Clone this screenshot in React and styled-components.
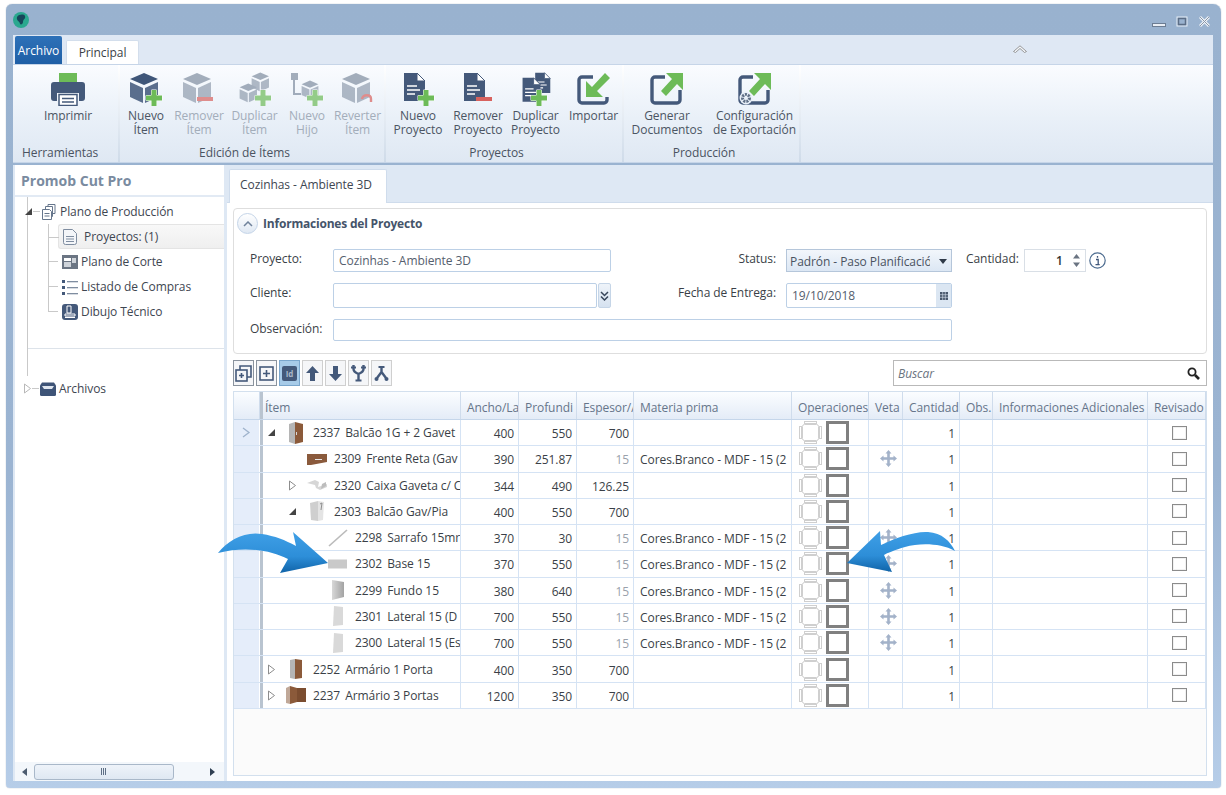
import React from 'react';
import styled, { createGlobalStyle } from 'styled-components';

const GlobalStyles = createGlobalStyle`
  html, body {
    margin: 0;
    padding: 0;
    background: #fff;
  }
  body {
    font-family: "Open Sans", "Noto Sans", sans-serif;
    font-size: 12px;
    letter-spacing: -0.07px;
    color: #3a3f47;
  }
`;

const DARK = '#44597a';
const GREEN = '#6dbb58';
const RED = '#d8625e';
const GRID_COLUMNS = '26px 201px 58px 58px 57px 158px 77px 34px 57px 33px 155px 58px';

const Page = styled.div`
  position: relative;
  width: 1226px;
  height: 795px;
  padding: 4px 5px 7px 6px;
  box-sizing: border-box;
`;

const Window = styled.div`
  height: 100%;
  display: flex;
  flex-direction: column;
  border-radius: 6px 8px 4px 4px;
  background: linear-gradient(#99b2cf, #9bb4d2 60%, #b6cde8);
  box-shadow: 0 0 1px #7f8ea3;
  padding: 0 8px 7px 7px;
  box-sizing: border-box;
`;

const TitleBar = styled.div`
  height: 31px;
  flex: none;
  display: flex;
  align-items: center;
  justify-content: space-between;
  padding-right: 2px;
`;

const WindowButtons = styled.div`
  display: flex;
  align-items: center;
  gap: 10px;
  margin-top: 4px;
`;

const TabStrip = styled.div`
  height: 29px;
  flex: none;
  display: flex;
  align-items: flex-end;
  gap: 4px;
  padding-left: 2px;
  background: #dfe8f4;
  position: relative;
`;

const FileTab = styled.div`
  width: 47px;
  height: 28px;
  display: flex;
  align-items: center;
  justify-content: center;
  color: #fff;
  background: linear-gradient(#2e71b8, #1f5fa6);
  border-radius: 2px 2px 0 0;
`;

const RibbonTab = styled.div`
  width: 73px;
  height: 24px;
  display: flex;
  align-items: center;
  justify-content: center;
  background: #fff;
  border: 1px solid #d3deec;
  border-bottom: none;
  border-radius: 2px 2px 0 0;
  box-sizing: border-box;
`;

const Collapse = styled.svg`
  position: absolute;
  right: 186px;
  top: 10px;
`;

const Ribbon = styled.div`
  height: 99px;
  flex: none;
  display: flex;
  padding-left: 2px;
  background: linear-gradient(#fafcff, #e9f0f8 55%, #dfe8f3);
  border-top: 1px solid #c6d5e8;
  border-bottom: 1px solid #c6d5e8;
  box-sizing: border-box;
`;

const Group = styled.div`
  flex: ${p => (p.$fill ? 1 : 'none')};
  display: flex;
  flex-direction: column;
  width: ${p => (p.$width ? `${p.$width}px` : 'auto')};
`;

const GroupButtons = styled.div`
  flex: 1;
  display: flex;
`;

const GroupLabel = styled.div`
  height: 20px;
  text-align: ${p => (p.$left ? 'left' : 'center')};
  padding: ${p => (p.$left ? '0 0 0 7px' : '0 15px 0 0')};
  line-height: 22px;
  color: #4a5361;
`;

const Divider = styled.div`
  width: 2px;
  flex: none;
  background: linear-gradient(#fff, #cfdbe9);
`;

const RibbonButton = styled.div`
  width: ${p => p.$width}px;
  flex: none;
  display: flex;
  flex-direction: column;
  align-items: center;
  padding-top: 7px;
  text-align: center;
  line-height: 14px;
  color: ${p => (p.$off ? '#a3adba' : '#4b5563')};
  white-space: nowrap;
  svg {
    margin-bottom: 3px;
    opacity: ${p => (p.$off ? 0.7 : 1)};
  }
`;

const Body = styled.div`
  flex: 1;
  min-height: 0;
  display: flex;
  margin-top: 2px;
  background: #dee8f4;
  padding: 0 0 0 2px;
`;

const Sidebar = styled.div`
  width: 209px;
  flex: none;
  display: flex;
  flex-direction: column;
  background: #fff;
`;

const SidebarTitle = styled.div`
  height: 32px;
  flex: none;
  padding-left: 6px;
  line-height: 31px;
  font-size: 14px;
  font-weight: 700;
  color: #7a8ba0;
  border-bottom: 2px solid #e2eaf4;
  box-sizing: border-box;
  letter-spacing: 0;
`;

const TreeArea = styled.div`
  flex: 1;
  padding-left: 12px;
`;

const TreeTrunk = styled.div`
  border-left: 1px solid #c9c9c9;
  height: 179px;
  position: relative;
`;

const TreeNode = styled.div`
  height: 25px;
  display: flex;
  align-items: center;
  padding-top: ${p => p.$top || 0}px;
  color: #3e4651;
  white-space: nowrap;
`;

const Expander = styled.svg`
  margin-left: -4px;
  flex: none;
`;

const NodeLine = styled.span`
  width: 7px;
  height: 1px;
  background: #c9c9c9;
  flex: none;
`;

const NodeLabel = styled.span`
  margin-left: 2px;
`;

const SubTree = styled.div`
  margin-left: 20px;
  position: relative;
  &::before {
    content: '';
    position: absolute;
    left: 0;
    top: 0;
    height: 88px;
    width: 1px;
    background: #c9c9c9;
  }
`;

const SubNode = styled.div`
  height: 25px;
  display: flex;
  align-items: center;
  gap: ${p => (p.$selected ? 5 : 2)}px;
  margin-left: 10px;
  padding-left: ${p => (p.$selected ? 2 : 3)}px;
  white-space: nowrap;
  color: #3e4651;
  position: relative;
  box-sizing: border-box;
  background: ${p => (p.$selected ? 'linear-gradient(#f8f8f8, #efefef)' : 'none')};
  border: ${p => (p.$selected ? '1px solid #e4e4e4' : 'none')};
  border-right: none;
  border-radius: 3px 0 0 3px;
  &::before {
    content: '';
    position: absolute;
    left: -10px;
    top: 12px;
    width: 10px;
    height: 1px;
    background: #c9c9c9;
  }
`;

const TreeRule = styled.div`
  position: absolute;
  left: 0;
  right: 0;
  top: 151px;
  height: 1px;
  background: #dde3ea;
`;

const ScrollBar = styled.div`
  height: 19px;
  flex: none;
  display: flex;
  align-items: center;
  padding: 0 9px 0 7px;
  background: #f3f7fb;
  box-sizing: border-box;
`;

const ScrollThumb = styled.div`
  width: 140px;
  height: 16px;
  margin: 0 auto 0 6px;
  display: flex;
  align-items: center;
  justify-content: center;
  border: 1px solid #a9b8c9;
  border-radius: 3px;
  background: linear-gradient(#eef3f9, #dfe8f2);
  box-sizing: border-box;
`;

const Content = styled.div`
  flex: 1;
  min-width: 0;
  display: flex;
  flex-direction: column;
  margin-left: 3px;
`;

const DocTabs = styled.div`
  height: 38px;
  flex: none;
  display: flex;
  align-items: flex-end;
  padding-left: 2px;
  box-sizing: border-box;
  border-bottom: 1px solid #cfdcec;
`;

const DocTab = styled.div`
  width: 158px;
  height: 34px;
  display: flex;
  align-items: center;
  justify-content: center;
  background: #fff;
  border: 1px solid #cfdcec;
  border-bottom: none;
  border-radius: 2px 2px 0 0;
  margin-bottom: -1px;
  box-sizing: border-box;
  padding: 0 4px 4px 0;
  color: #3e4651;
`;

const DocBody = styled.div`
  flex: 1;
  min-height: 0;
  display: flex;
  flex-direction: column;
  padding: 5px 6px 5px 6px;
  background: #fff;
`;

const InfoBox = styled.div`
  height: 146px;
  flex: none;
  border: 1px solid #dedede;
  border-radius: 4px;
  box-sizing: border-box;
  padding: 4px 0 0 3px;
`;

const InfoHeader = styled.div`
  display: flex;
  align-items: center;
  gap: 5px;
  height: 21px;
  font-weight: 700;
  color: #45546a;
  letter-spacing: -0.2px;
`;

const CollapseCircle = styled.div`
  width: 21px;
  height: 21px;
  border-radius: 50%;
  border: 1px solid #c4d4e8;
  background: linear-gradient(#fff, #dfe8f3);
  box-sizing: border-box;
  display: flex;
  align-items: center;
  justify-content: center;
`;

const FormGrid = styled.div`
  display: grid;
  grid-template-columns: 83px 278px 175px 166px auto;
  grid-template-rows: 23px 25px 22px;
  row-gap: 11px;
  margin: 15px 0 0 13px;
  align-items: stretch;
`;

const FieldLabel = styled.div`
  line-height: 19px;
  color: #3a3f47;
  text-align: ${p => (p.$right ? 'right' : 'left')};
  padding-right: ${p => (p.$right ? 10 : 0)}px;
  white-space: nowrap;
`;

const Input = styled.div`
  border: 1px solid #bcd0e6;
  border-radius: 2px;
  background: #fff;
  box-sizing: border-box;
  padding-left: 5px;
  line-height: 22px;
  color: #55606e;
  grid-column: ${p => p.$span || 'auto'};
  display: flex;
  align-items: center;
  justify-content: space-between;
  overflow: hidden;
  white-space: nowrap;
`;

const ClientField = styled.div`
  display: flex;
  gap: 1px;
`;

const ClientInput = styled(Input)`
  flex: 1;
`;

const ClientButton = styled.div`
  width: 13px;
  border: 1px solid #c5d5e7;
  border-radius: 2px;
  background: linear-gradient(#eef3f9, #d6e2f0);
  box-sizing: border-box;
  display: flex;
  align-items: center;
  justify-content: center;
`;

const SelectBox = styled.div`
  border: 1px solid #b5c6da;
  background: linear-gradient(#f2f6fb, #dce7f4);
  box-sizing: border-box;
  display: flex;
  align-items: center;
  padding: 1px 0 0 3px;
  color: #4a5361;
  white-space: nowrap;
  overflow: hidden;
`;

const SelectText = styled.span`
  width: 140px;
  overflow: hidden;
`;

const SelectCaret = styled.svg`
  margin-left: 9px;
  flex: none;
`;

const DateButton = styled.div`
  width: 15px;
  align-self: stretch;
  flex: none;
  background: #dbe6f2;
  display: flex;
  align-items: center;
  justify-content: center;
`;

const QuantityWrap = styled.div`
  display: flex;
  align-items: flex-start;
  margin-left: 14px;
  gap: 5px;
  white-space: nowrap;
`;

const Spin = styled.div`
  width: 62px;
  height: 23px;
  border: 1px solid #d9dfe6;
  box-sizing: border-box;
  display: flex;
  align-items: center;
  justify-content: flex-end;
  gap: 10px;
  padding-right: 5px;
  font-weight: 600;
  color: #333;
`;

const InfoIcon = styled.svg`
  margin: 3px 0 0 -2px;
`;

const ToolRow = styled.div`
  height: 26px;
  flex: none;
  display: flex;
  align-items: center;
  justify-content: space-between;
  margin-top: 6px;
`;

const ToolButtons = styled.div`
  display: flex;
  gap: 2px;
`;

const ToolButton = styled.div`
  width: 21px;
  height: 26px;
  display: flex;
  align-items: center;
  justify-content: center;
  box-sizing: border-box;
  border: 1px solid ${p => (p.$active ? '#7aa6cc' : p.$strong ? '#8a939e' : '#cfcfcf')};
  background: ${p => (p.$active ? '#a7cbe8' : '#f5f6f8')};
`;

const IdGlyph = styled.div`
  width: 15px;
  height: 15px;
  border-radius: 2px;
  background: ${DARK};
  color: #aab6c7;
  font-size: 8px;
  font-weight: 700;
  line-height: 15px;
  text-align: center;
  letter-spacing: 0;
`;

const SearchBox = styled.div`
  width: 314px;
  height: 26px;
  border: 1px solid #b9b9b9;
  box-sizing: border-box;
  display: flex;
  align-items: center;
  justify-content: space-between;
  padding: 0 6px 0 4px;
  font-style: italic;
  color: #6c7480;
`;

const Grid = styled.div`
  flex: 1;
  min-height: 0;
  margin-top: 5px;
  border: 1px solid #d3e0ee;
  background: #fbfbfb;
  box-sizing: border-box;
  display: flex;
  flex-direction: column;
`;

const HeaderRow = styled.div`
  height: 28px;
  flex: none;
  display: grid;
  grid-template-columns: ${GRID_COLUMNS};
  background: linear-gradient(#fbfdff, #e4ecf7);
  border-bottom: 1px solid #c5d6ea;
  box-sizing: border-box;
`;

const HeaderCell = styled.div`
  padding-left: 6px;
  line-height: 31px;
  overflow: hidden;
  white-space: nowrap;
  color: #66758a;
  border-right: 1px solid #cfdcec;
`;

const ItemHeader = styled(HeaderCell)`
  border-left: 3px solid #b9c4d0;
  padding-left: 2px;
`;

const DataRow = styled.div`
  height: 26.27px;
  flex: none;
  display: grid;
  grid-template-columns: ${GRID_COLUMNS};
  background: #fff;
  border-bottom: 1px solid #d5e3f4;
  box-sizing: border-box;
`;

const RowHead = styled.div`
  background: #e5edfa;
  margin-right: 1px;
  display: flex;
  align-items: center;
  justify-content: center;
`;

const Cell = styled.div`
  display: flex;
  align-items: center;
  justify-content: ${p => (p.$num ? 'flex-end' : 'flex-start')};
  padding: ${p => (p.$num ? '2px 4px 0 0' : '2px 0 0 6px')};
  border-right: 1px solid #d5e3f4;
  overflow: hidden;
  white-space: nowrap;
  color: ${p => (p.$muted ? '#9aa1ab' : '#3a3f47')};
`;

const ItemCell = styled(Cell)`
  border-left: 3px solid #b9c4d0;
  padding-left: ${p => p.$indent}px;
  padding-top: 0;
  gap: 0;
`;

const ItemExpander = styled.span`
  width: 17px;
  flex: none;
  display: flex;
  align-items: center;
`;

const ItemThumb = styled.span`
  width: 24px;
  flex: none;
  display: flex;
  align-items: center;
  justify-content: center;
  margin-right: 5px;
`;

const ItemId = styled.span`
  margin-right: 5px;
`;

const OperationCell = styled(Cell)`
  gap: 4px;
  padding: 0 0 0 7px;
`;

const EdgeBox = styled.div`
  width: 23px;
  height: 23px;
  box-sizing: border-box;
  border: 3px solid #808080;
  flex: none;
`;

const CenterCell = styled(Cell)`
  justify-content: center;
  padding: 0 0 0 ${p => p.$nudge}px;
`;

const CheckBox = styled.div`
  width: 15px;
  height: 14px;
  border: 1px solid #8b8b8b;
  box-shadow: inset 0 0 0 1px #f1f1f1;
  box-sizing: border-box;
`;

const ArrowOverlay = styled.svg`
  position: absolute;
  left: 0;
  top: 0;
  pointer-events: none;
`;

/* icons */

const PlusBadge = ({ x = 17, y = 18 }) => (
  <path
    d={`M${x + 5.5} ${y}h5v5.500h5.500v5h-5.500v5.500h-5v-5.500h-5.500v-5h5.500z`}
    fill={GREEN}
    stroke="#fff"
    strokeWidth="1"
    paintOrder="stroke"
  />
);

const MinusBadge = () => <rect x="15" y="25" width="16" height="4" fill={RED} />;

const UndoBadge = () => (
  <path d="M21 27c1-5 9-5 9 0v3" fill="none" stroke={RED} strokeWidth="2.4" />
);

const Cube = ({ scale = 1, x = 0, y = 0, fill = DARK }) => (
  <g transform={`translate(${x} ${y}) scale(${scale})`} fill={fill}>
    <path d="M1 7 15 1l14 6-14 6z" />
    <path d="M1 10l13 6v15L1 25z" opacity=".85" />
    <path d="M29 10 16 16v15l13-6z" opacity=".85" />
  </g>
);

const BoxIcon = ({ kind, fill = '#3f5679' }) => (
  <svg width="34" height="34" viewBox="0 0 34 34">
    {kind === 'duplicate' ? (
      <>
        <Cube scale={0.62} x={13} y={0} fill={fill} />
        <Cube scale={0.62} x={1} y={11} fill={fill} />
        <PlusBadge />
      </>
    ) : kind === 'child' ? (
      <>
        <rect x="1" y="1" width="7" height="7" fill={fill} />
        <path d="M4 8v14h7" fill="none" stroke={fill} strokeWidth="2" />
        <Cube scale={0.6} x={11} y={8} fill={fill} />
        <PlusBadge />
      </>
    ) : (
      <>
        <Cube fill={fill} />
        {kind === 'new' && <PlusBadge />}
        {kind === 'remove' && <MinusBadge />}
        {kind === 'revert' && <UndoBadge />}
      </>
    )}
  </svg>
);

const PageShape = ({ x = 0, y = 0, scale = 1 }) => (
  <g transform={`translate(${x} ${y}) scale(${scale})`}>
    <path d="M3 1h13l8 8v20H3z" fill={DARK} />
    <path d="M16 1v8h8z" fill="#fff" stroke={DARK} strokeWidth="1" />
    <path d="M6 14h10M6 18h13M6 22h8" stroke="#fff" strokeWidth="1.5" />
  </g>
);

const DocIcon = ({ kind }) => (
  <svg width="34" height="34" viewBox="0 0 34 34">
    {kind === 'duplicate' ? (
      <>
        <PageShape x={14} y={0} scale={0.72} />
        <PageShape x={1} y={5} scale={0.85} />
        <PlusBadge x={12} y={18} />
      </>
    ) : (
      <>
        <PageShape />
        {kind === 'new' && <PlusBadge />}
        {kind === 'remove' && <MinusBadge />}
      </>
    )}
  </svg>
);

const ShareIcon = ({ inward, gear }) => (
  <svg width="34" height="34" viewBox="0 0 34 34">
    <path
      d={inward ? 'M16 5H5a3 3 0 0 0-3 3v20a3 3 0 0 0 3 3h22a3 3 0 0 0 3-3v-3' : 'M15 5H5a3 3 0 0 0-3 3v20a3 3 0 0 0 3 3h22a3 3 0 0 0 3-3V18'}
      fill="none"
      stroke={DARK}
      strokeWidth="3.4"
    />
    {inward ? (
      <path d="M9 9v16h17l-6-6L33 6l-5-5-13 14-6-6z" fill={GREEN} />
    ) : (
      <path d="M33 1v17l-6-6-11 12-5-5 11-12-6-6z" fill={GREEN} />
    )}
    {gear && (
      <>
        <circle cx="8" cy="26" r="6.500" fill="#e9f0f8" />
        <circle cx="8" cy="26" r="3.500" fill="none" stroke="#5f6f85" strokeWidth="3" strokeDasharray="2 1" />
      </>
    )}
  </svg>
);

const PrinterIcon = () => (
  <svg width="34" height="34" viewBox="0 0 34 34">
    <rect x="8" y="1" width="18" height="10" fill={GREEN} />
    <path d="M3 10h28a3 3 0 0 1 3 3v13a3 3 0 0 1-3 3h-3v-8H6v8H3a3 3 0 0 1-3-3V13a3 3 0 0 1 3-3z" fill={DARK} />
    <rect x="8" y="22.5" width="18" height="11" fill="#fff" stroke={DARK} strokeWidth="1.5" />
    <path d="M11 26.5h12M11 30h12" stroke={DARK} strokeWidth="1.5" />
  </svg>
);

const TreeIcon = ({ kind }) => (
  <svg width="18" height="18" viewBox="0 0 18 18" style={{ flex: 'none' }}>
    {kind === 'stack' && (
      <g fill="#fff" stroke="#66768c" strokeWidth="1">
        <path d="M8 1.500h7v9h-7z" />
        <path d="M5.500 3.500h7v10h-7z" />
        <path d="M2.500 6.500h7l2 2v8h-9z" />
        <path d="M4.500 10.500h5M4.500 13h5" />
      </g>
    )}
    {kind === 'doc' && (
      <g fill="#f4f6f9" stroke="#7f8da0" strokeWidth="1">
        <path d="M2.500 1.500h9l4 4v9a2 2 0 0 1-2 2h-9a2 2 0 0 1-2-2z" />
        <path d="M5 8.500h8M5 11h8M5 13.500h8" />
      </g>
    )}
    {kind === 'cut' && (
      <g>
        <rect x="1" y="2" width="16" height="14" fill="#6b7583" />
        <rect x="3" y="5" width="7" height="3" fill="#fff" />
        <rect x="11" y="5" width="4" height="5" fill="#cfd4da" />
        <rect x="3" y="9" width="7" height="5" fill="#cfd4da" />
      </g>
    )}
    {kind === 'list' && (
      <g fill={DARK}>
        <rect x="1" y="2" width="3" height="3" />
        <rect x="1" y="8" width="3" height="3" />
        <rect x="1" y="14" width="3" height="3" />
        <g fill="#7f8da0">
          <rect x="6" y="3" width="11" height="1.300" />
          <rect x="6" y="9" width="11" height="1.300" />
          <rect x="6" y="15" width="11" height="1.300" />
        </g>
      </g>
    )}
    {kind === 'draw' && (
      <g>
        <rect x="1" y="1" width="16" height="16" rx="3" fill={DARK} />
        <path d="M6 3h4v7H6zM4 11h10v2H4zM4 14.500h10" fill="none" stroke="#fff" strokeWidth="1" />
      </g>
    )}
    {kind === 'box' && (
      <g>
        <path d="M1 5.500 3 2.500h12l2 3v9a1.500 1.500 0 0 1-1.500 1.500h-13A1.500 1.500 0 0 1 1 14.500z" fill="#3e5477" />
        <path d="M3 6h12l-2 3H5z" fill="#dfe6ef" />
      </g>
    )}
  </svg>
);

const TriangleOpen = () => (
  <svg width="9" height="9" viewBox="0 0 9 9">
    <path d="M8 1v7H1z" fill="#444" />
  </svg>
);

const TriangleClosed = () => (
  <svg width="9" height="11" viewBox="0 0 9 11">
    <path d="M1.500 1 7.500 5.500 1.500 10z" fill="#fff" stroke="#8d8d8d" />
  </svg>
);

const ItemIcon = ({ kind }) => {
  switch (kind) {
    case 'cabinet':
      return (
        <svg width="18" height="24" viewBox="0 0 18 24">
          <path d="M2 3l6-2v22l-6-2z" fill="#b5b5b5" />
          <path d="M8 1l8 2v18l-8 2z" fill="#8b5a3a" />
          <path d="M9 11h1v3H9z" fill="#d8d8d8" />
        </svg>
      );
    case 'front':
      return (
        <svg width="20" height="12" viewBox="0 0 20 12">
          <path d="M0 1h20v8L4 12H0z" fill="#8a5a3c" />
          <path d="M8 6h7v1H8z" fill="#e8e8e8" />
        </svg>
      );
    case 'drawer':
      return (
        <svg width="20" height="10" viewBox="0 0 20 10">
          <path d="M0 3 8 0l4 2-1 5 9-3v3l-7 3-4-2-1-3z" fill="#d6d6d6" />
          <path d="M15 4l4-2v4l-5 3z" fill="#bdbdbd" />
        </svg>
      );
    case 'carcass':
      return (
        <svg width="16" height="22" viewBox="0 0 16 22">
          <path d="M1 3l8-2v20l-7-1z" fill="#cfcfcf" />
          <path d="M9 1l6 1-1 18-5 1z" fill="#e4e4e4" />
          <path d="M11 4l2-1-1 7" fill="none" stroke="#8e8e8e" />
        </svg>
      );
    case 'rod':
      return (
        <svg width="20" height="18" viewBox="0 0 20 18">
          <path d="M1 17 19 1" stroke="#bbb" strokeWidth="1.600" />
        </svg>
      );
    case 'plate':
      return (
        <svg width="20" height="10" viewBox="0 0 20 10">
          <rect width="19" height="9" y="0.500" fill="#c9c9c9" />
        </svg>
      );
    case 'back':
      return (
        <svg width="14" height="20" viewBox="0 0 14 20">
          <defs>
            <linearGradient id="backFill" x1="0" x2="1">
              <stop offset="0" stopColor="#d8d8d8" />
              <stop offset="1" stopColor="#a3a3a3" />
            </linearGradient>
          </defs>
          <path d="M1 0l12 2v15L1 20z" fill="url(#backFill)" />
        </svg>
      );
    case 'side':
      return (
        <svg width="14" height="22" viewBox="0 0 14 22">
          <path d="M3 1l9 1v18l-10 1z" fill="#d9d9d9" />
        </svg>
      );
    case 'door':
      return (
        <svg width="14" height="22" viewBox="0 0 14 22">
          <path d="M1 2l5-1v20l-5-1z" fill="#b5b5b5" />
          <path d="M6 1l7 1v18l-7 1z" fill="#8b5a3a" />
        </svg>
      );
    default:
      return (
        <svg width="20" height="18" viewBox="0 0 20 18">
          <path d="M0 2l4-2v18l-4-1z" fill="#c0a898" />
          <path d="M4 0l7 2v14l-7 2z" fill="#8b5a3a" />
          <path d="M11 2l9 0v14h-9z" fill="#7b4d30" />
        </svg>
      );
  }
};

const EdgeIcon = () => (
  <svg width="23" height="23" viewBox="0 0 23 23" style={{ flex: 'none' }}>
    <g fill="#fff" stroke="#cfcfcf">
      <rect x="5.500" y="0.500" width="12" height="2" />
      <rect x="5.500" y="20.500" width="12" height="2" />
      <rect x="0.500" y="5.500" width="2" height="12" />
      <rect x="20.500" y="5.500" width="2" height="12" />
      <path d="M3.500 5.500a2 2 0 0 1 2-2h12a2 2 0 0 1 2 2v12a2 2 0 0 1-2 2h-12a2 2 0 0 1-2-2z" />
    </g>
  </svg>
);

const MoveIcon = () => (
  <svg width="17" height="17" viewBox="0 0 17 17">
    <path
      d="M8.500 0 11.500 3.500H9.800V7.200H13.500V5.500L17 8.500 13.500 11.500V9.800H9.800V13.500H11.500L8.500 17 5.500 13.500H7.200V9.800H3.500V11.500L0 8.500 3.500 5.500V7.200H7.200V3.500H5.500z"
      fill="#a3b2c9"
    />
  </svg>
);

const ToolGlyph = ({ kind }) => {
  const c = DARK;
  switch (kind) {
    case 'expandAll':
      return (
        <svg width="17" height="17" viewBox="0 0 17 17" fill="none" stroke={c} strokeWidth="1.600">
          <path d="M5 5V1h11v11h-4" />
          <rect x="1" y="5" width="11" height="11" />
          <path d="M6.500 8v5M4 10.500h5" />
        </svg>
      );
    case 'add':
      return (
        <svg width="15" height="15" viewBox="0 0 15 15" fill="none" stroke={c} strokeWidth="1.600">
          <rect x="1" y="1" width="13" height="13" />
          <path d="M7.500 4v7M4 7.500h7" />
        </svg>
      );
    case 'up':
      return (
        <svg width="13" height="15" viewBox="0 0 13 15">
          <path d="M6.500 0 13 7H9v8H4V7H0z" fill={c} />
        </svg>
      );
    case 'down':
      return (
        <svg width="13" height="15" viewBox="0 0 13 15">
          <path d="M6.500 15 0 8h4V0h5v8h4z" fill={c} />
        </svg>
      );
    case 'merge':
      return (
        <svg width="15" height="17" viewBox="0 0 15 17" fill="none" stroke={c} strokeWidth="2.400">
          <path d="M2.500 0v4q0 3 5 5Q12.500 7 12.500 4V0M7.500 8v8" />
          <path d="M0 2.500h5M10 2.500h5M4.500 15.500h6" strokeWidth="2" />
        </svg>
      );
    default:
      return (
        <svg width="15" height="17" viewBox="0 0 15 17" fill="none" stroke={c} strokeWidth="2.400">
          <path d="M7.500 1v6M7.500 7 3 13M7.500 7 12 13" />
          <circle cx="2.500" cy="14" r="2" fill={c} stroke="none" />
          <circle cx="12.500" cy="14" r="2" fill={c} stroke="none" />
          <path d="M4.500 2h6" strokeWidth="2" />
        </svg>
      );
  }
};

const Arrows = () => (
  <ArrowOverlay width="1226" height="795" viewBox="0 0 1226 795">
    <defs>
      <linearGradient id="arrowBlue" x1="0" y1="0" x2="0" y2="1">
        <stop offset="0" stopColor="#3f9fe6" />
        <stop offset="0.6" stopColor="#2d8ed8" />
        <stop offset="1" stopColor="#0f63a8" />
      </linearGradient>
    </defs>
    <path
      d="M218 553C228 540 245 531 262 534 275 536 285 540 296 546L293 532 328 563 280 573 288 559C270 550 245 546 218 553Z"
      fill="url(#arrowBlue)"
    />
    <path
      d="M847 563 880 531 881 545C895 538 915 531 928 532 942 533 950 541 955 551 940 543 920 543 905 547 895 550 887 553 884 555L892 572Z"
      fill="url(#arrowBlue)"
    />
  </ArrowOverlay>
);

const MATERIAL = 'Cores.Branco - MDF - 15 (2';

const ROWS = [
  { level: 0, open: true, icon: 'cabinet', id: '2337', name: 'Balcão 1G + 2 Gavet', w: '400', d: '550', t: '700', current: true },
  { level: 1, icon: 'front', id: '2309', name: 'Frente Reta (Gav', w: '390', d: '251.87', t: '15', mat: true },
  { level: 1, closed: true, icon: 'drawer', id: '2320', name: 'Caixa Gaveta c/ C', w: '344', d: '490', t: '126.25' },
  { level: 1, open: true, icon: 'carcass', id: '2303', name: 'Balcão Gav/Pia', w: '400', d: '550', t: '700' },
  { level: 2, icon: 'rod', id: '2298', name: 'Sarrafo 15mr', w: '370', d: '30', t: '15', mat: true },
  { level: 2, icon: 'plate', id: '2302', name: 'Base 15', w: '370', d: '550', t: '15', mat: true },
  { level: 2, icon: 'back', id: '2299', name: 'Fundo 15', w: '380', d: '640', t: '15', mat: true },
  { level: 2, icon: 'side', id: '2301', name: 'Lateral 15 (D', w: '700', d: '550', t: '15', mat: true },
  { level: 2, icon: 'side', id: '2300', name: 'Lateral 15 (Es', w: '700', d: '550', t: '15', mat: true },
  { level: 0, closed: true, icon: 'door', id: '2252', name: 'Armário 1 Porta', w: '400', d: '350', t: '700' },
  { level: 0, closed: true, icon: 'wide', id: '2237', name: 'Armário 3 Portas', w: '1200', d: '350', t: '700' }
];

const HEADERS = ['Ancho/La', 'Profundi', 'Espesor/A', 'Materia prima', 'Operaciones', 'Veta', 'Cantidad', 'Obs.', 'Informaciones Adicionales', 'Revisado'];

const RIBBON_ITEMS = [
  { width: 52, lines: ['Nuevo', 'Ítem'], icon: <BoxIcon kind="new" /> },
  { width: 54, lines: ['Remover', 'Ítem'], icon: <BoxIcon kind="remove" fill="#7f8da0" />, off: true },
  { width: 57, lines: ['Duplicar', 'Ítem'], icon: <BoxIcon kind="duplicate" fill="#7f8da0" />, off: true },
  { width: 48, lines: ['Nuevo', 'Hijo'], icon: <BoxIcon kind="child" fill="#7f8da0" />, off: true },
  { width: 53, lines: ['Reverter', 'Ítem'], icon: <BoxIcon kind="revert" fill="#7f8da0" />, off: true }
];

const PROJECT_ITEMS = [
  { width: 64, lines: ['Nuevo', 'Proyecto'], icon: <DocIcon kind="new" /> },
  { width: 56, lines: ['Remover', 'Proyecto'], icon: <DocIcon kind="remove" /> },
  { width: 59, lines: ['Duplicar', 'Proyecto'], icon: <DocIcon kind="duplicate" /> },
  { width: 57, lines: ['Importar'], icon: <ShareIcon inward /> }
];

const OUTPUT_ITEMS = [
  { width: 86, lines: ['Generar', 'Documentos'], icon: <ShareIcon /> },
  { width: 89, lines: ['Configuración', 'de Exportación'], icon: <ShareIcon gear /> }
];

const RibbonGroup = ({ width, label, items }) => (
  <Group $width={width}>
    <GroupButtons>
      {items.map(item => (
        <RibbonButton key={item.lines.join()} $width={item.width} $off={item.off}>
          {item.icon}
          {item.lines.map(line => (
            <span key={line}>{line}</span>
          ))}
        </RibbonButton>
      ))}
    </GroupButtons>
    <GroupLabel>{label}</GroupLabel>
  </Group>
);

const GridRow = ({ row }) => (
  <DataRow>
    <RowHead>
      {row.current && (
        <svg width="9" height="11" viewBox="0 0 9 11">
          <path d="M1 1l6 4.500L1 10" fill="none" stroke="#9fb3cc" strokeWidth="1.300" />
        </svg>
      )}
    </RowHead>
    <ItemCell $indent={4 + row.level * 21}>
      <ItemExpander>{row.open ? <TriangleOpen /> : row.closed ? <TriangleClosed /> : null}</ItemExpander>
      <ItemThumb>
        <ItemIcon kind={row.icon} />
      </ItemThumb>
      <ItemId>{row.id}</ItemId>
      {row.name}
    </ItemCell>
    <Cell $num>{row.w}</Cell>
    <Cell $num>{row.d}</Cell>
    <Cell $num $muted={row.t === '15'}>{row.t}</Cell>
    <Cell>{row.mat ? MATERIAL : ''}</Cell>
    <OperationCell>
      <EdgeIcon />
      <EdgeBox />
    </OperationCell>
    <CenterCell $nudge={5}>{row.mat && <MoveIcon />}</CenterCell>
    <Cell $num>1</Cell>
    <Cell />
    <Cell />
    <CenterCell $nudge={5}>
      <CheckBox />
    </CenterCell>
  </DataRow>
);

const App = () => (
  <Page>
    <GlobalStyles />
    <Window>
      <TitleBar>
        <svg width="18" height="18" viewBox="0 0 18 18" style={{ marginLeft: -1 }}>
          <circle cx="9" cy="9" r="8" fill="#2aa88f" />
          <path d="M5 6c2-3 7-3 8-1 1 3-2 3-2 6 0 2-2 3-3 2 0-3-4-3-3-7z" fill="#17465a" />
        </svg>
        <WindowButtons>
          <svg width="14" height="14" viewBox="0 0 14 14">
            <rect x="0.500" y="8.500" width="13" height="3" fill="#e9eef5" stroke="#6c7d93" />
          </svg>
          <svg width="12" height="14" viewBox="0 0 12 14">
            <rect x="1" y="2" width="10" height="9" fill="none" stroke="#e8eef6" strokeWidth="1" />
            <rect x="2.500" y="3.500" width="7" height="6" fill="none" stroke="#5c6e86" strokeWidth="1.500" />
          </svg>
          <svg width="13" height="14" viewBox="0 0 13 14">
            <path d="M2 2l9 9M11 2l-9 9" stroke="#eef2f7" strokeWidth="2.800" />
            <path d="M2 2l9 9M11 2l-9 9" stroke="#8896a8" strokeWidth="1" />
          </svg>
        </WindowButtons>
      </TitleBar>

      <TabStrip>
        <FileTab>Archivo</FileTab>
        <RibbonTab>Principal</RibbonTab>
        <Collapse width="14" height="8" viewBox="0 0 14 8">
          <path d="M0.500 6.500 7 0.800l6.500 5.700-2 1L7 3.500 2.500 7.500z" fill="#f2f5f9" stroke="#8d8d8d" strokeWidth="0.900" />
        </Collapse>
      </TabStrip>

      <Ribbon>
        <Group $width={103}>
          <GroupButtons>
            <RibbonButton $width={106}>
              <PrinterIcon />
              <span>Imprimir</span>
            </RibbonButton>
          </GroupButtons>
          <GroupLabel $left>Herramientas</GroupLabel>
        </Group>
        <Divider />
        <RibbonGroup width={264} label="Edición de Ítems" items={RIBBON_ITEMS} />
        <Divider />
        <RibbonGroup width={236} label="Proyectos" items={PROJECT_ITEMS} />
        <Divider />
        <RibbonGroup width={175} label="Producción" items={OUTPUT_ITEMS} />
        <Divider />
        <Group $fill />
      </Ribbon>

      <Body>
        <Sidebar>
          <SidebarTitle>Promob Cut Pro</SidebarTitle>
          <TreeArea>
            <TreeTrunk>
              <TreeNode $top={2}>
                <Expander width="9" height="9" viewBox="0 0 9 9">
                  <path d="M8 1v7H1z" fill="#444" />
                </Expander>
                <NodeLine />
                <TreeIcon kind="stack" />
                <NodeLabel>Plano de Producción</NodeLabel>
              </TreeNode>
              <SubTree>
                <SubNode $selected>
                  <TreeIcon kind="doc" />
                  Proyectos: (1)
                </SubNode>
                <SubNode>
                  <TreeIcon kind="cut" />
                  Plano de Corte
                </SubNode>
                <SubNode>
                  <TreeIcon kind="list" />
                  Listado de Compras
                </SubNode>
                <SubNode>
                  <TreeIcon kind="draw" />
                  Dibujo Técnico
                </SubNode>
              </SubTree>
              <TreeRule />
            </TreeTrunk>
            <TreeNode>
              <Expander width="9" height="11" viewBox="0 0 9 11">
                <path d="M1.500 1 7.500 5.500 1.500 10z" fill="#fff" stroke="#b8b8b8" />
              </Expander>
              <NodeLine />
              <TreeIcon kind="box" />
              <NodeLabel>Archivos</NodeLabel>
            </TreeNode>
          </TreeArea>
          <ScrollBar>
            <svg width="6" height="8" viewBox="0 0 6 8">
              <path d="M5 0v8L0 4z" fill="#4d5d70" />
            </svg>
            <ScrollThumb>
              <svg width="6" height="7" viewBox="0 0 6 7">
                <path d="M0.500 0v7M2.500 0v7M4.500 0v7" stroke="#5e6f85" />
              </svg>
            </ScrollThumb>
            <svg width="6" height="8" viewBox="0 0 6 8">
              <path d="M1 0v8l5-4z" fill="#2f3f52" />
            </svg>
          </ScrollBar>
        </Sidebar>

        <Content>
          <DocTabs>
            <DocTab>Cozinhas - Ambiente 3D</DocTab>
          </DocTabs>
          <DocBody>
            <InfoBox>
              <InfoHeader>
                <CollapseCircle>
                  <svg width="10" height="6" viewBox="0 0 10 6">
                    <path d="M1 5l4-4 4 4" fill="none" stroke="#6f829b" strokeWidth="1.500" />
                  </svg>
                </CollapseCircle>
                Informaciones del Proyecto
              </InfoHeader>
              <FormGrid>
                <FieldLabel>Proyecto:</FieldLabel>
                <Input>Cozinhas - Ambiente 3D</Input>
                <FieldLabel $right>Status:</FieldLabel>
                <SelectBox>
                  <SelectText>Padrón - Paso Planificación</SelectText>
                  <SelectCaret width="8" height="5" viewBox="0 0 8 5">
                    <path d="M0 0h8L4 5z" fill="#2f3a48" />
                  </SelectCaret>
                </SelectBox>
                <QuantityWrap>
                  <FieldLabel>Cantidad:</FieldLabel>
                  <Spin>
                    1
                    <svg width="7" height="13" viewBox="0 0 7 13">
                      <path d="M3.500 0 7 4.500H0zM3.500 13 0 8.500h7z" fill="#6a7482" />
                    </svg>
                  </Spin>
                  <InfoIcon width="17" height="17" viewBox="0 0 17 17">
                    <circle cx="8.500" cy="8.500" r="7.700" fill="#fff" stroke="#4d6c90" strokeWidth="1.200" />
                    <path d="M7 7.500h2.200v5M6.500 12.700h4.200M8.500 4v1.800" fill="none" stroke="#3f5679" strokeWidth="1.300" />
                  </InfoIcon>
                </QuantityWrap>

                <FieldLabel>Cliente:</FieldLabel>
                <ClientField>
                  <ClientInput />
                  <ClientButton>
                    <svg width="9" height="10" viewBox="0 0 9 10">
                      <path d="M1 1l3.500 3.500L8 1M1 5.500 4.500 9 8 5.500" fill="none" stroke="#38465a" strokeWidth="1.500" />
                    </svg>
                  </ClientButton>
                </ClientField>
                <FieldLabel $right>Fecha de Entrega:</FieldLabel>
                <Input>
                  19/10/2018
                  <DateButton>
                    <svg width="8" height="8" viewBox="0 0 8 8">
                      <path d="M0 0h8v8H0z" fill="#47566b" />
                      <path d="M0 2.700h8M0 5.300h8M2.700 0v8M5.300 0v8" stroke="#dbe6f2" strokeWidth=".6" />
                    </svg>
                  </DateButton>
                </Input>
                <span />

                <FieldLabel>Observación:</FieldLabel>
                <Input $span="2 / span 3" />
              </FormGrid>
            </InfoBox>

            <ToolRow>
              <ToolButtons>
                <ToolButton $strong><ToolGlyph kind="expandAll" /></ToolButton>
                <ToolButton $strong><ToolGlyph kind="add" /></ToolButton>
                <ToolButton $active><IdGlyph>Id</IdGlyph></ToolButton>
                <ToolButton><ToolGlyph kind="up" /></ToolButton>
                <ToolButton><ToolGlyph kind="down" /></ToolButton>
                <ToolButton><ToolGlyph kind="merge" /></ToolButton>
                <ToolButton><ToolGlyph kind="split" /></ToolButton>
              </ToolButtons>
              <SearchBox>
                Buscar
                <svg width="13" height="13" viewBox="0 0 13 13">
                  <circle cx="5" cy="5" r="3.600" fill="none" stroke="#222" strokeWidth="1.800" />
                  <path d="M8 8l4 4" stroke="#222" strokeWidth="2.600" />
                </svg>
              </SearchBox>
            </ToolRow>

            <Grid>
              <HeaderRow>
                <HeaderCell />
                <ItemHeader>Ítem</ItemHeader>
                {HEADERS.map(h => (
                  <HeaderCell key={h}>{h}</HeaderCell>
                ))}
              </HeaderRow>
              {ROWS.map(row => (
                <GridRow key={row.id} row={row} />
              ))}
            </Grid>
          </DocBody>
        </Content>
      </Body>
    </Window>
    <Arrows />
  </Page>
);

export default App;
